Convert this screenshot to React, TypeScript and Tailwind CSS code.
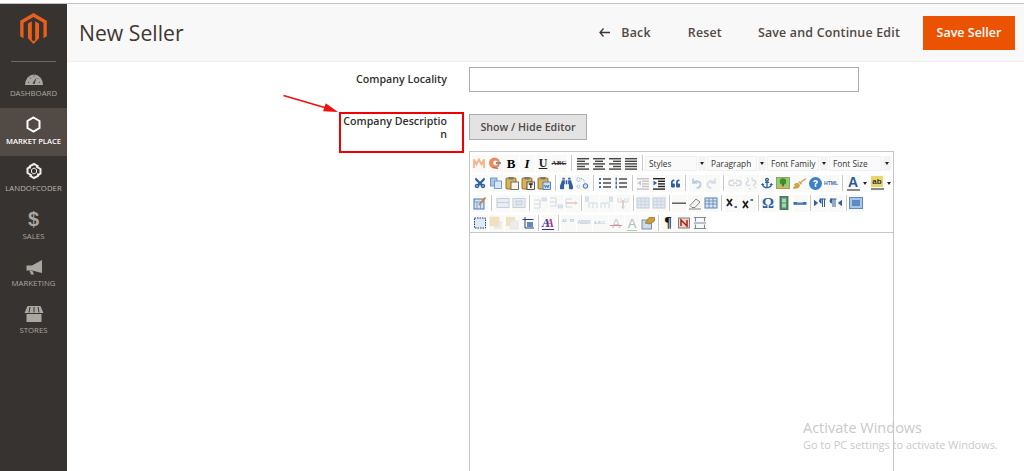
import React from "react";
import { FaCut, FaBinoculars, FaQuoteLeft, FaAnchor, FaBroom, FaQuestion } from "react-icons/fa";

const L = "#c5cfda";

const bars = (c: string, rows: [number, number][]) =>
  rows.map(([x, w], i) => <rect key={i} x={x} y={2 + i * 2.6} width={w} height={1.4} fill={c} />);

const clip = (fill: string, stroke: string, inner?: React.ReactNode) => (
  <>
    <rect x="1" y="2" width="10" height="11" rx="1" fill="#dcb458" stroke="#7a5a1c" strokeWidth=".8" />
    <rect x="3.500" y="1" width="5" height="2.500" fill="#777" />
    <rect x="6" y="6" width="7.500" height="7.500" fill={fill} stroke={stroke} strokeWidth=".8" />
    {inner}
  </>
);

const text = (t: string, cls: string) => <span className={`leading-none whitespace-nowrap ${cls}`}>{t}</span>;

const glyphs: Record<string, React.ReactNode> = {
  bold: text("B", "font-['Liberation_Serif',serif] font-bold text-[13px] text-black"),
  ital: text("I", "font-['Liberation_Serif',serif] font-bold italic text-[13px] text-black"),
  und: text("U", "font-['Liberation_Serif',serif] font-bold underline text-[12px] text-[#222]"),
  abc: text("ABC", "font-['Liberation_Serif',serif] font-bold line-through text-[7px] text-[#333]"),
  html: text("HTML", "font-['Liberation_Sans',sans-serif] font-bold text-[5px] text-[#3f6fa8]"),
  para: text("¶", "font-['Liberation_Serif',serif] font-bold text-[14px] text-[#111]"),
  omega: text("Ω", "font-['Liberation_Serif',serif] font-bold text-[15px] text-[#2f5f9e]"),
  cite: text("“ ”", "font-['Liberation_Serif',serif] font-bold text-[10px] text-[#b9c9da]"),
  abbr: text("ABBR", "font-['Liberation_Sans',sans-serif] font-bold text-[4.500px] text-[#b9c9da]"),
  acr: text("A.B.C.", "font-['Liberation_Sans',sans-serif] font-bold text-[4px] text-[#b9c9da]"),
  del: (
    <span className="relative leading-none font-['Liberation_Sans',sans-serif] text-[13px] text-[#c3ccd6]">
      A<span className="absolute left-[-2px] right-[-2px] top-[8px] h-px bg-[#e08a8a]" />
    </span>
  ),
  ins: (
    <span className="relative leading-none font-['Liberation_Sans',sans-serif] text-[13px] text-[#a9bacb]">
      A<span className="absolute left-[-1px] right-[-1px] bottom-[-1px] h-px bg-[#a9d6a0]" />
    </span>
  ),
  styl: (
    <span className="relative leading-none font-['Liberation_Serif',serif] font-bold italic text-[12px] tracking-[-4px] pr-[4px] text-[#27359a]">
      A<span className="text-[#b03a7a]">A</span>
      <span className="absolute left-0 right-0 bottom-[-1px] h-px bg-[#27359a]" />
    </span>
  ),
  fore: (
    <span className="relative flex flex-col items-center leading-none">
      <span className="font-['Liberation_Sans',sans-serif] font-bold text-[14px] leading-[13px] text-[#2b5a94]">A</span>
      <span className="w-[13px] h-[2px] bg-[#8a8a8a]" />
    </span>
  ),
  back: (
    <span className="flex flex-col items-center leading-none">
      <span className="font-['Liberation_Sans',sans-serif] font-bold text-[8px] leading-[11px] text-[#333] bg-[#e6d66c] px-px">ab</span>
      <span className="w-[13px] h-[2px] mt-px bg-[#8a8a8a]" />
    </span>
  ),
  cut: <FaCut size={12} color="#2f5f9e" style={{ transform: "rotate(-90deg)" }} />,
  find: <FaBinoculars size={13} color="#2f5f9e" />,
  quote: <FaQuoteLeft size={9} color="#2f5f9e" />,
  anchor: <FaAnchor size={12} color="#2f5f9e" />,
  clean: <FaBroom size={13} color="#c9a54e" />,
  help: (
    <span className="w-[13px] h-[13px] rounded-full bg-[#3f7fc4] flex items-center justify-center">
      <FaQuestion size={7} color="#fff" />
    </span>
  ),
};

const icons: Record<string, React.ReactNode> = {
  mage: <path d="M2 12V3.500l2.500 5L7 3.500l2.500 5L12 3.500V12" fill="none" stroke="#f4b48f" strokeWidth="1.800" />,
  moxie: (
    <>
      <circle cx="6.500" cy="7" r="5.500" fill="#ea8a62" />
      <circle cx="7.500" cy="7" r="2.400" fill="#f7eee8" />
      <rect x="8" y="6" width="5" height="2" fill="#8e8e8e" />
      <path d="M5 11.500l5 1" stroke="#c4603a" strokeWidth="1.200" />
    </>
  ),
  left: bars("#444", [[1, 12], [1, 8], [1, 12], [1, 8], [1, 12]]),
  center: bars("#444", [[1, 12], [3, 8], [1, 12], [3, 8], [1, 12]]),
  right: bars("#444", [[1, 12], [5, 8], [1, 12], [5, 8], [1, 12]]),
  justify: bars("#444", [[1, 12], [1, 12], [1, 12], [1, 12], [1, 12]]),
  copy: (
    <>
      <rect x="1.500" y="2" width="6.500" height="8" fill="#a9c6e8" stroke="#5f8cc0" strokeWidth=".8" />
      <rect x="5.500" y="5" width="7" height="7.500" fill="#d8e6f6" stroke="#5f8cc0" strokeWidth=".8" />
    </>
  ),
  paste: clip("#f6f3e8", "#555"),
  pastet: clip("#f6f3e8", "#333", <path d="M7.800 8h4M9.800 8v4" stroke="#222" strokeWidth="1.300" />),
  pastew: clip("#c5dbf2", "#3f6fa8", <path d="M7.500 9l1 2.500 1.200-2 1.200 2 1-2.500" fill="none" stroke="#2f5f9e" strokeWidth=".9" />),
  replace: (
    <>
      <circle cx="3.500" cy="3.500" r="1.800" fill="none" stroke="#6f9ccc" strokeWidth=".9" strokeDasharray="1 .7" />
      <circle cx="10.500" cy="10" r="2.300" fill="#cfe0f4" stroke="#3f6fa8" />
      <circle cx="3.500" cy="10.500" r="1.500" fill="none" stroke="#6f9ccc" strokeWidth=".9" strokeDasharray="1 .7" />
      <path d="M6 2.500c2 0 3 1.500 3.500 4" fill="none" stroke="#6f9ccc" strokeDasharray="1 .8" />
    </>
  ),
  ul: (
    <>
      {[2, 6, 10].map((y) => (
        <g key={y}>
          <rect x="1" y={y} width="2" height="2" fill="#3f6fa8" />
          <rect x="5" y={y + 0.3} width="8" height="1.400" fill="#444" />
        </g>
      ))}
    </>
  ),
  ol: (
    <>
      {[2, 6, 10].map((y) => (
        <g key={y}>
          <rect x="1.500" y={y - 0.5} width="1.500" height="3" fill="#3f6fa8" />
          <rect x="5" y={y + 0.3} width="8" height="1.400" fill="#444" />
        </g>
      ))}
    </>
  ),
  outdent: (
    <>
      {bars("#c4c4c4", [[1, 12], [6, 7], [6, 7], [6, 7], [1, 12]])}
      <path d="M1.500 7L5 4.500v5z" fill="#b9c9dc" />
    </>
  ),
  indent: (
    <>
      {bars("#222", [[1, 12], [6, 7], [6, 7], [6, 7], [1, 12]])}
      <path d="M5 7L1.500 4.500v5z" fill="#2f5f9e" />
    </>
  ),
  undo: <path d="M4 2.500v4.500h4.500M4.500 6.500C7 4 12 5 11.500 9c-.3 2-2 3-4 3" fill="none" stroke="#b6cbe2" strokeWidth="1.700" />,
  redo: <path d="M10 2.500v4.500H5.500M9.500 6.500C7 4 2 5 2.500 9c.3 2 2 3 4 3" fill="none" stroke="#d5dde6" strokeWidth="1.700" />,
  link: <path d="M6 4.500H3.500a2.500 2.500 0 0 0 0 5H6M8 4.500h2.500a2.500 2.500 0 0 1 0 5H8M5 7h4" fill="none" stroke="#d3d8de" strokeWidth="1.400" />,
  unlink: <path d="M5 4L3 6a2 2 0 0 0 3 3M9 10l2-2a2 2 0 0 0-3-3M3 2l1 1M11 11l1 1M8 1.500v2M6 12v1.500" fill="none" stroke="#d3d8de" strokeWidth="1.400" />,
  image: (
    <>
      <rect x=".5" y="1.500" width="13" height="11" fill="#8fcf74" stroke="#8b8f55" strokeWidth=".8" />
      <circle cx="7" cy="5.500" r="3.200" fill="#3f8f2f" />
      <rect x="6.300" y="7.500" width="1.500" height="3.500" fill="#7a4f20" />
      <rect x="1" y="10.500" width="12" height="1.500" fill="#d9b75a" />
    </>
  ),
  edit: (
    <>
      <rect x="1" y="3" width="10" height="10" fill="#cfe0f4" stroke="#3f6fa8" strokeWidth=".9" />
      <path d="M1 6h10M4 6v7M7.500 6v7" stroke="#5f8cc0" strokeWidth=".7" />
      <path d="M6 9l6.500-7.500" stroke="#c8813a" strokeWidth="1.800" />
    </>
  ),
  tbl1: (
    <>
      <rect x="1" y="2.500" width="12" height="9" fill="#e8edf3" stroke={L} />
      <path d="M1 6.500h12" stroke={L} />
    </>
  ),
  tbl2: (
    <>
      <rect x="1" y="2.500" width="12" height="9" fill="#e8edf3" stroke={L} />
      <rect x="4" y="5" width="6" height="4" fill="#dbe5f0" stroke={L} />
    </>
  ),
  row1: (
    <>
      <path d="M1 4h6v8H1M1 8h6" fill="none" stroke="#ccd3db" strokeWidth=".8" />
      <rect x="9" y="2" width="4.500" height="3" fill="#dbe5f0" stroke="#c2d2e2" strokeWidth=".6" />
    </>
  ),
  row2: (
    <>
      <path d="M1 2h6v8H1M1 6h6" fill="none" stroke="#ccd3db" strokeWidth=".8" />
      <rect x="9" y="9" width="4.500" height="3" fill="#dbe5f0" stroke="#c2d2e2" strokeWidth=".6" />
    </>
  ),
  row3: (
    <>
      <path d="M1 3h6M1 11h6M1 3v8" fill="none" stroke="#ccd3db" strokeWidth=".8" />
      <path d="M1 7h9" stroke="#e6b8b8" strokeWidth="1.200" />
      <path d="M10 5l3 2-3 2z" fill="#cbd5df" />
    </>
  ),
  col1: (
    <>
      <path d="M5 12V7h8v5M9 7v5" fill="none" stroke="#ccd3db" strokeWidth=".8" />
      <rect x="1.500" y="1" width="3" height="4.500" fill="#dbe5f0" stroke="#c2d2e2" strokeWidth=".6" />
    </>
  ),
  col2: (
    <>
      <path d="M1 12V7h8v5M5 7v5" fill="none" stroke="#ccd3db" strokeWidth=".8" />
      <rect x="9.500" y="1" width="3" height="4.500" fill="#dbe5f0" stroke="#c2d2e2" strokeWidth=".6" />
    </>
  ),
  col3: (
    <>
      <path d="M2 2v4h10V2M5 2v4M9 2v4" fill="none" stroke="#ccd3db" strokeWidth=".8" />
      <path d="M7 4v7" stroke="#e6b8b8" strokeWidth="1.400" />
      <path d="M5 10.500l2 3 2-3z" fill="#cbd5df" />
    </>
  ),
  tblh: (
    <>
      <rect x="1" y="2" width="12" height="10" fill="#dfe7f1" stroke={L} />
      <path d="M5 2v10M9 2v10M1 5.300h12M1 8.600h12" stroke={L} strokeWidth=".7" />
    </>
  ),
  hr: <rect x="0" y="6.500" width="14" height="1.400" fill="#555" />,
  erase: <path d="M2 9.500L8 3l4 3-5 5.500H4zM1 13h12" fill="#f4f4f4" stroke="#777" strokeWidth=".9" />,
  table: (
    <>
      <rect x="1" y="2" width="12" height="10" fill="#d9e4f1" stroke="#4d78ab" strokeWidth=".9" />
      <path d="M1 5h12M1 8h12M5 2v10M9 2v10" stroke="#4d78ab" strokeWidth=".7" />
    </>
  ),
  sub: (
    <>
      <path d="M2 3l5 7M7 3l-5 7" stroke="#222" strokeWidth="1.800" />
      <rect x="9.500" y="10" width="2.500" height="2" fill="#3f6fa8" />
    </>
  ),
  sup: (
    <>
      <path d="M2 5l5 7M7 5l-5 7" stroke="#222" strokeWidth="1.800" />
      <rect x="9.500" y="3" width="2.500" height="2" fill="#3f6fa8" />
    </>
  ),
  film: (
    <>
      <rect x="3" y="0.500" width="8" height="13" fill="#4e8f65" stroke="#49604f" strokeWidth=".8" />
      <rect x="5" y="2.500" width="4" height="4" fill="#a7d7b9" />
      <rect x="5" y="7.500" width="4" height="4" fill="#a7d7b9" />
    </>
  ),
  nbsp: (
    <>
      <rect x="0.500" y="6" width="13" height="2.800" fill="#3f6fa8" />
      <rect x="4" y="6" width="6" height="1.200" fill="#9bbcdf" />
    </>
  ),
  ltr: <path d="M1.500 4.500L4.500 7l-3 2.500zM6.500 3h6.500M8.500 7a2 2 0 0 1 0-4M9.500 3v8M11.500 3v8" fill="#2f5f9e" stroke="#2f5f9e" strokeWidth="1" />,
  rtl: <path d="M12.500 4.500L9.500 7l3 2.500zM1 3h6.500M3 7a2 2 0 0 1 0-4M4 3v8M6 3v8" fill="#2f5f9e" stroke="#2f5f9e" strokeWidth="1" />,
  full: (
    <>
      <rect x=".5" y="1.500" width="13" height="11" fill="#a9c6e8" stroke="#5f8cc0" />
      <rect x="3" y="4" width="8" height="6" fill="#5c8bc4" />
    </>
  ),
  layer: (
    <>
      <rect x="1.500" y="2" width="11" height="10" fill="#dfe9f5" />
      <rect x="1.500" y="2" width="11" height="10" fill="none" stroke="#1f3f70" strokeDasharray="1.500 1" />
    </>
  ),
  fwd: (
    <>
      <rect x="5" y="5" width="8" height="8" fill="#ececec" />
      <rect x="1" y="1" width="9" height="9" fill="#f0e2bd" stroke="#e2dccb" strokeWidth=".6" />
    </>
  ),
  bwd: (
    <>
      <rect x="1" y="1" width="9" height="9" fill="#f0e2bd" />
      <rect x="5" y="5" width="8" height="8" fill="#ececec" stroke="#e0e0e0" strokeWidth=".6" />
    </>
  ),
  abs: (
    <>
      <path d="M1.500 3.500h11v0M4 1v11h9" fill="none" stroke="#2f3f70" strokeWidth="1" />
      <rect x="6" y="6" width="6" height="5" fill="#5c8bc4" />
    </>
  ),
  attr: (
    <>
      <rect x="1" y="4" width="9.500" height="9" fill="#cfdbe8" stroke="#607da0" strokeWidth=".8" />
      <path d="M4 7l4-5.500h5.500v3.500L9 8z" fill="#c99e32" stroke="#806020" strokeWidth=".6" />
    </>
  ),
  nb: (
    <>
      <rect x="1.500" y="2" width="11" height="10" fill="#f0d0c8" stroke="#777" strokeWidth=".9" />
      <path d="M4 10V4l6 6V4" fill="none" stroke="#a32418" strokeWidth="1.500" />
    </>
  ),
  page: <path d="M1 1.500h12M1 12.500h12M2.500 1.500v4M11.500 1.500v4M2.500 8.500v4M11.500 8.500v4M1 7h12" stroke="#7e8a98" strokeWidth="1.100" fill="none" />,
};

type Item = string | number;

function Cell({ item }: { item: string }) {
  if (item === "caret")
    return (
      <div className="w-2 h-[18px] flex items-center justify-center">
        <div className="w-0 h-0 border-l-[2.5px] border-r-[2.5px] border-t-[3px] border-l-transparent border-r-transparent border-t-[#222]" />
      </div>
    );
  return (
    <div className="w-4 h-[18px] flex items-center justify-center">
      <div className="w-[15px] h-[17px] bg-[#f9f9f8] flex items-center justify-center">
        {glyphs[item] ?? (
          <svg width="14" height="14" viewBox="0 0 14 14">
            {icons[item]}
          </svg>
        )}
      </div>
    </div>
  );
}

function Row({ items, className = "" }: { items: Item[]; className?: string }) {
  return (
    <div className={`flex items-center h-5 ${className}`}>
      {items.map((it, i) =>
        typeof it === "number" ? (
          <div key={i} className="flex justify-center" style={{ width: it }}>
            <div className="w-px h-4 bg-[#c8c8c8]" />
          </div>
        ) : (
          <Cell key={i} item={it} />
        ),
      )}
    </div>
  );
}

function Sel({ label, w }: { label: string; w: string }) {
  return (
    <div className={`${w} h-[15px] flex items-center`}>
      <div className="flex-1 h-full bg-[#fafafa] border border-[#f0f0f0] pl-[3px] text-[8.3px] leading-[13px] text-[#333] truncate">{label}</div>
      <div className="w-2 h-full ml-px bg-[#f4f4f4] flex items-center justify-center">
        <div className="w-0 h-0 border-l-[2.5px] border-r-[2.5px] border-t-[3px] border-l-transparent border-r-transparent border-t-[#222]" />
      </div>
    </div>
  );
}

const navIcons: Record<string, React.ReactNode> = {
  gauge: (
    <svg width="18" height="12" viewBox="0 0 18 12">
      <path d="M0 12a9 10.500 0 0 1 18 0z" fill="#a9a5a0" />
      <path d="M7.500 10.500L11.500 4.500 9.500 11z" fill="#373330" />
      <path d="M3 9l1.200.6M5 4.500l.7 1M9 2.500v1.200M13.500 5l-.7.9M15 9l-1.200.6" stroke="#373330" strokeWidth=".8" />
    </svg>
  ),
  hex: (
    <svg width="15" height="17" viewBox="0 0 15 17">
      <path d="M7.500 1.500l6 3.500v7l-6 3.500-6-3.500V5z" fill="none" stroke="#fff" strokeWidth="2" />
    </svg>
  ),
  lof: (
    <svg width="16" height="18" viewBox="0 0 16 18">
      <g fill="none" stroke="#f0eeeb" strokeWidth="2">
        <path d="M4 6.500V4.200L8 2l4.500 2.500" />
        <path d="M10 4.500l4.500 2.500v4.500L12.500 13" />
        <path d="M12 11.500V13.800L8 16l-4.500-2.500" />
        <path d="M6 13.500L1.500 11V6.500L3.500 5" />
      </g>
      <path d="M5.500 7.500L8 6l2.500 1.500v3L8 12l-2.500-1.500z" fill="none" stroke="#f0eeeb" strokeWidth="1" />
    </svg>
  ),
  dollar: <span className="font-['Liberation_Sans',sans-serif] font-bold text-[20px] leading-[18px] text-[#aaa6a0]">$</span>,
  mega: (
    <svg width="18" height="15" viewBox="0 0 18 15">
      <path d="M17 0v13L7 10.500H1.500v-5H7z" fill="#aaa6a0" />
      <path d="M4.500 10.500L6 14.500h3L7.500 11z" fill="#aaa6a0" />
    </svg>
  ),
  store: (
    <svg width="20" height="17" viewBox="0 0 20 17">
      <path d="M3.500 1h13L19.500 8h-19z" fill="#aaa6a0" />
      <path d="M6 2L5 7.500M10 2v5.500M14 2l1 5.500" stroke="#373330" strokeWidth="1" />
      <rect x="2.500" y="9" width="15" height="8" fill="#aaa6a0" />
    </svg>
  ),
};

const nav = [
  { i: "gauge", l: "DASHBOARD" },
  { i: "hex", l: "MARKET PLACE", active: true },
  { i: "lof", l: "LANDOFCODER" },
  { i: "dollar", l: "SALES" },
  { i: "mega", l: "MARKETING" },
  { i: "store", l: "STORES" },
];

export default function App() {
  return (
    <div className="relative h-[471px] w-[1024px] overflow-hidden bg-white font-['Open_Sans',sans-serif] flex flex-col">
      <div className="h-[4px] shrink-0 bg-white border-b border-[#c4c4c4]" />
      <div className="flex flex-1 min-h-0">
        <aside className="w-[67px] shrink-0 bg-[#373330] flex flex-col items-center">
          <div className="h-[58px] w-[45px] shrink-0 border-b border-[#6f6a66] flex justify-center pt-[9px]">
            <svg width="27" height="31" viewBox="0 0 24 28">
              <path
                fill="#eb5e1b"
                d="M12 0L24 7v14l-3 1.700V8.700L12 3.500 3 8.700v14L0 21V7zM10.500 7.500v17L12 25.400l1.500-.9v-17L17 9.500v13.300L12 28l-5-5.200V9.500z"
              />
            </svg>
          </div>
          <div className="w-full -mt-[1px] flex flex-col">
            {nav.map((n) => (
              <div
                key={n.l}
                className={`h-[47.4px] flex flex-col items-center justify-end pb-[10px] gap-[3px] ${n.active ? "bg-[#514a45] text-white" : n.i === "lof" ? "text-[#b8b5b1]" : "text-[#aaa6a0]"}`}
              >
                <div className="h-[18px] flex items-end justify-center">{navIcons[n.i]}</div>
                <div className={`leading-[10px] whitespace-nowrap ${n.active ? "font-semibold text-[7.6px]" : "text-[7.8px]"}`}>{n.l}</div>
              </div>
            ))}
          </div>
        </aside>
        <main className="flex-1 min-w-0 flex flex-col">
          <header className="h-[58px] shrink-0 bg-[#f8f8f8] border-b border-[#eeeeee] flex items-center pl-3 pr-[9px]">
            <h1 className="text-[21.2px] text-[#41362f] font-normal leading-none pt-[1px]">New Seller</h1>
            <div className="ml-auto flex items-center text-[12.4px] font-semibold text-[#514943] tracking-[0.2px]">
              <svg width="11" height="9" viewBox="0 0 11 9" className="mr-[11px]">
                <path d="M4.500 .5L1 4.500l3.500 4M1 4.500h10" fill="none" stroke="#41362f" strokeWidth="1.300" />
              </svg>
              <span className="pt-[2px]">Back</span>
              <span className="ml-[37px] pt-[2px]">Reset</span>
              <span className="ml-[36px] pt-[2px]">Save and Continue Edit</span>
              <button className="ml-[23px] w-[92px] h-[34px] pt-[2px] bg-[#eb5202] text-white font-semibold text-[12.5px] tracking-normal">Save Seller</button>
            </div>
          </header>
          <div className="flex-1 min-h-0 flex flex-col pt-[5px]">
            <div className="flex items-center">
              <label className="w-[380px] text-right text-[10.65px] font-semibold text-[#303030]">Company Locality</label>
              <div className="ml-[22px] w-[390px] h-[25px] border border-[#adadad] bg-white" />
            </div>
            <div className="flex flex-1 min-h-0 mt-[22px]">
              <div className="w-[380px] flex justify-end pt-[1px]">
                <label className="block w-[104px] h-fit text-right break-all text-[10.65px] leading-[13px] font-semibold text-[#303030]">
                  Company Description
                </label>
              </div>
              <div className="ml-[22px] flex flex-col flex-1 min-h-0">
                <button className="w-[118px] h-[26px] bg-[#e3e3e3] border border-[#adadad] text-[10.7px] font-semibold text-[#514943]">
                  Show / Hide Editor
                </button>
                <div className="mt-[11px] w-[425px] flex-1 min-h-0 border-x border-t border-[#c6c6c6]">
                  <div className="h-[81px] border-b border-[#c6c6c6] pt-[1px]">
                    <div className="flex items-center h-5 pl-px">
                      <Row items={["mage", "moxie", "bold", "ital", "und", "abc", 8, "left", "center", "right", "justify", 6]} />
                      <div className="flex items-center gap-px">
                        <Sel label="Styles" w="w-[61px]" />
                        <Sel label="Paragraph" w="w-[59px]" />
                        <Sel label="Font Family" w="w-[61px]" />
                        <Sel label="Font Size" w="w-[62px]" />
                      </div>
                    </div>
                    <Row
                      className="pl-[2px]"
                      items={["cut", "copy", "paste", "pastet", "pastew", 6, "find", "replace", 7, "ul", "ol", 6, "outdent", "indent", "quote", 5, "undo", "redo", 7, "link", "unlink", "anchor", "image", "clean", "help", "html", 6, "fore", "caret", "back", "caret"]}
                    />
                    <Row
                      className="pl-[2px]"
                      items={["edit", 7, "tbl1", "tbl2", 5, "row1", "row2", "row3", 3, "col1", "col2", "col3", 4, "tblh", "tblh", 4, "hr", "erase", "table", 5, "sub", "sup", 4, "omega", "film", "nbsp", 4, "ltr", "rtl", 4, "full"]}
                    />
                    <Row
                      className="pl-[2px]"
                      items={["layer", "fwd", "bwd", "abs", 4, "styl", 4, "cite", "abbr", "acr", "del", "ins", "attr", 4, "para", "nb", "page"]}
                    />
                  </div>
                </div>
              </div>
            </div>
          </div>
        </main>
      </div>

      {/* annotation drawn over the page */}
      <div className="absolute left-[339px] top-[112px] w-[125px] h-[41px] border-2 border-[#f00000]" />
      <svg className="absolute left-[280px] top-[92px]" width="62" height="24" viewBox="0 0 62 24">
        <path d="M3.500 3.500L48 16.500" stroke="#f01010" strokeWidth="1.800" />
        <path d="M58 20l-15-.8 2.800-8z" fill="#f01010" />
      </svg>

      {/* OS watermark */}
      <div className="absolute left-[803px] top-[419px] text-[#c9c9c9] pointer-events-none">
        <div className="text-[14.5px] leading-[18px]">Activate Windows</div>
        <div className="text-[10.95px] leading-[16px] whitespace-nowrap">Go to PC settings to activate Windows.</div>
      </div>
    </div>
  );
}
